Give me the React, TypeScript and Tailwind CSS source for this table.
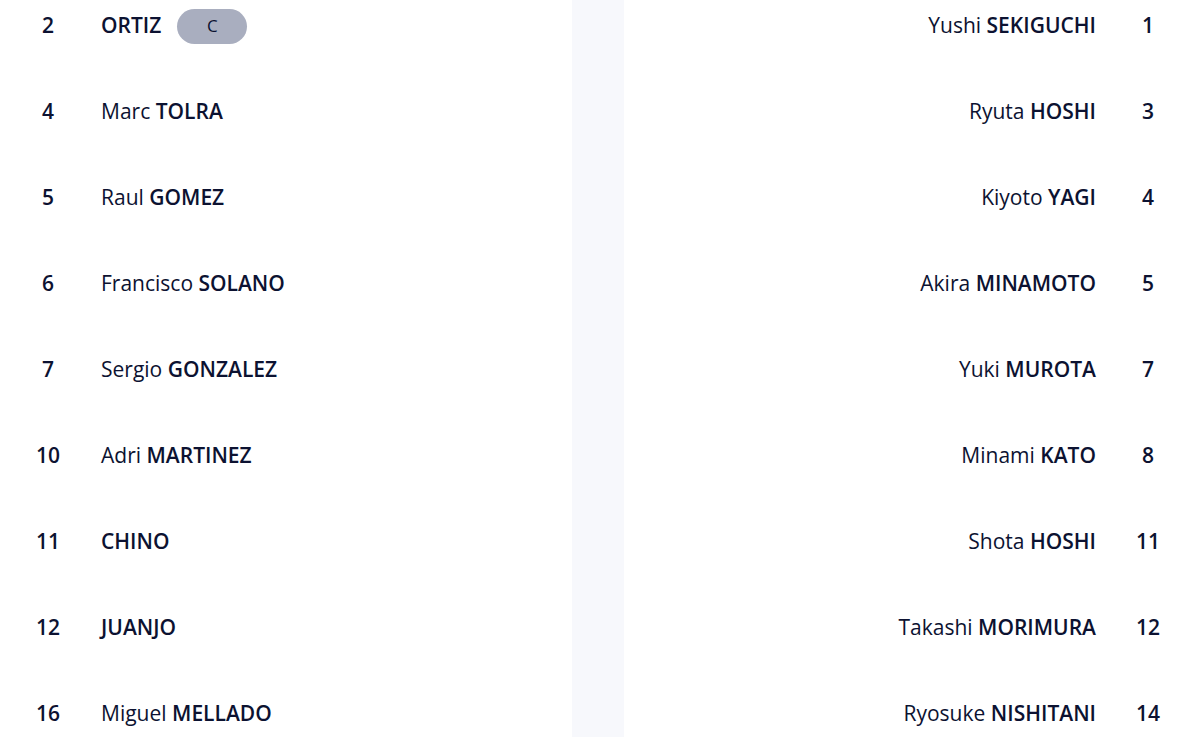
type Player = { no: number; first?: string; last: string; captain?: boolean };

const home: Player[] = [
  { no: 2, last: "ORTIZ", captain: true },
  { no: 4, first: "Marc", last: "TOLRA" },
  { no: 5, first: "Raul", last: "GOMEZ" },
  { no: 6, first: "Francisco", last: "SOLANO" },
  { no: 7, first: "Sergio", last: "GONZALEZ" },
  { no: 10, first: "Adri", last: "MARTINEZ" },
  { no: 11, last: "CHINO" },
  { no: 12, last: "JUANJO" },
  { no: 16, first: "Miguel", last: "MELLADO" },
];

const away: Player[] = [
  { no: 1, first: "Yushi", last: "SEKIGUCHI" },
  { no: 3, first: "Ryuta", last: "HOSHI" },
  { no: 4, first: "Kiyoto", last: "YAGI" },
  { no: 5, first: "Akira", last: "MINAMOTO" },
  { no: 7, first: "Yuki", last: "MUROTA" },
  { no: 8, first: "Minami", last: "KATO" },
  { no: 11, first: "Shota", last: "HOSHI" },
  { no: 12, first: "Takashi", last: "MORIMURA" },
  { no: 14, first: "Ryosuke", last: "NISHITANI" },
];

function Name({ p }: { p: Player }) {
  return (
    <span className="whitespace-nowrap">
      {p.first && <span className="font-normal">{p.first} </span>}
      <span className="font-semibold">{p.last}</span>
    </span>
  );
}

function HomeRow({ p }: { p: Player }) {
  return (
    <div className="flex h-[86px] items-center">
      <span className="w-[96px] text-center font-semibold">{p.no}</span>
      <span className="ml-[5px] flex items-center">
        <Name p={p} />
        {p.captain && (
          <span className="ml-[16px] flex h-[35px] w-[70px] items-center justify-center rounded-full bg-[#a9aebf] text-[17px] font-medium">
            C
          </span>
        )}
      </span>
    </div>
  );
}

function AwayRow({ p }: { p: Player }) {
  return (
    <div className="flex h-[86px] items-center justify-end pr-[4px]">
      <Name p={p} />
      <span className="ml-[4px] w-[96px] text-center font-semibold">{p.no}</span>
    </div>
  );
}

export default function App() {
  return (
    <div
      className="h-[737px] w-[1200px] overflow-hidden bg-white text-[21px] text-[#0c1231]"
      style={{ fontFamily: '"Open Sans", "Noto Sans", sans-serif' }}
    >
      <div className="flex h-full">
        <div className="-mt-[17px] w-[572px]">
          {home.map((p) => (
            <HomeRow key={p.no} p={p} />
          ))}
        </div>
        <div className="w-[52px] bg-[#f7f8fc]" />
        <div className="-mt-[17px] flex-1">
          {away.map((p) => (
            <AwayRow key={p.no} p={p} />
          ))}
        </div>
      </div>
    </div>
  );
}
